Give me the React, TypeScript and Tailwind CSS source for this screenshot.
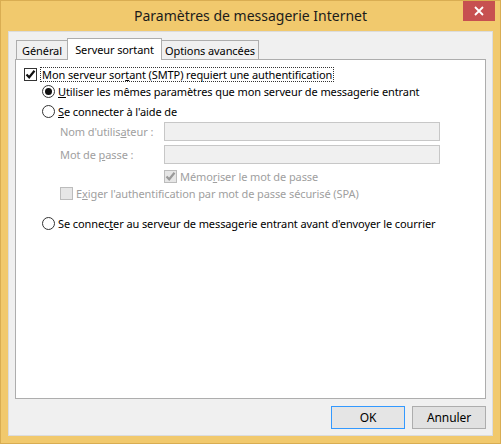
import React from 'react'

const font = { fontFamily: '"Noto Sans", "Open Sans", sans-serif' }

function Check({ checked, disabled }: { checked?: boolean; disabled?: boolean }) {
  return (
    <span
      className={`flex items-center justify-center w-[13px] h-[13px] border shrink-0 ${
        disabled ? 'border-[#bcbcbc] bg-[#e6e6e6]' : 'border-[#333] bg-white'
      }`}
    >
      {checked && (
        <svg width="11" height="11" viewBox="0 0 11 11">
          <path d="M1.5 5.5 L4.2 8.3 L9.5 1.8" fill="none" stroke={disabled ? '#9a9a9a' : '#111'} strokeWidth="2.2" />
        </svg>
      )}
    </span>
  )
}

function Radio({ checked }: { checked?: boolean }) {
  return (
    <span className="flex items-center justify-center w-[13px] h-[13px] rounded-full border border-[#333] bg-white shrink-0">
      {checked && <span className="w-[7px] h-[7px] rounded-full bg-[#111]" />}
    </span>
  )
}

export default function App() {
  return (
    <div
      style={font}
      className="w-[501px] h-[444px] bg-[#f1c96d] border border-[#d9ad52] flex flex-col text-[11px] tracking-[-0.1px] text-black leading-none"
    >
      <div className="relative h-[30px] flex items-center justify-center">
        <span className="text-[14px] tracking-normal text-[#1b1b1b]">Paramètres de messagerie Internet</span>
        <div className="absolute top-0 right-[5px] w-[32px] h-[20px] bg-[#c75050] flex items-center justify-center">
          <svg width="10" height="10" viewBox="0 0 10 10">
            <path d="M1 1 L9 9 M9 1 L1 9" stroke="#fff" strokeWidth="1.8" />
          </svg>
        </div>
      </div>

      <div className="flex-1 mx-[7px] mb-[7px] bg-[#f0f0f0] border border-[#dcdcdc] flex flex-col px-[6px] pt-[6px]">
        {/* tabs */}
        <div className="flex items-end h-[21px] pl-[1px]">
          <div className="h-[19px] w-[52px] flex items-center justify-center border border-b-0 border-[#adadad] bg-[#f0f0f0]">
            Général
          </div>
          <div className="h-[22px] w-[95px] flex items-center justify-center border border-b-0 border-[#adadad] bg-white -ml-[1px] relative z-10 -mb-[1px]">
            Serveur sortant
          </div>
          <div className="h-[19px] w-[98px] flex items-center justify-center border border-b-0 border-[#adadad] bg-[#f0f0f0] -ml-[1px]">
            Options avancées
          </div>
        </div>

        {/* panel */}
        <div className="h-[340px] bg-white border border-[#adadad] pl-[8px] pt-[7px] flex flex-col">
          <div className="flex items-center h-[14px] gap-[3px]">
            <Check checked />
            <span className="border border-dotted border-[#333] px-[1px] py-[1px] -my-[2px]">
              Mon serveur sor<u>t</u>ant (SMTP) requiert une authentification
            </span>
          </div>

          <div className="pl-[18px] pt-[3px] flex flex-col">
            <div className="flex items-center h-[14px] gap-[3px]">
              <Radio checked />
              <span>
                <u>U</u>tiliser les mêmes paramètres que mon serveur de messagerie entrant
              </span>
            </div>
            <div className="flex items-center h-[14px] gap-[3px] mt-[6px]">
              <Radio />
              <span>
                <u>S</u>e connecter à l'aide de
              </span>
            </div>

            <div className="pl-[18px] mt-[4px] flex flex-col text-[#a0a0a0]">
              <div className="flex items-center h-[19px]">
                <span className="w-[104px]">
                  Nom d'utilis<u>a</u>teur :
                </span>
                <div className="w-[276px] h-[19px] border border-[#c7c7c7] bg-[#f0f0f0]" />
              </div>
              <div className="flex items-center h-[19px] mt-[4px]">
                <span className="w-[104px]">
                  Mot de <u>p</u>asse :
                </span>
                <div className="w-[276px] h-[19px] border border-[#c7c7c7] bg-[#f0f0f0]" />
              </div>
              <div className="flex items-center h-[14px] gap-[3px] mt-[5px] ml-[104px]">
                <Check checked disabled />
                <span>
                  Mémo<u>r</u>iser le mot de passe
                </span>
              </div>
              <div className="flex items-center h-[14px] gap-[3px] mt-[3px]">
                <Check disabled />
                <span>
                  E<u>x</u>iger l'authentification par mot de passe sécurisé (SPA)
                </span>
              </div>
            </div>

            <div className="flex items-center h-[14px] gap-[3px] mt-[16px]">
              <Radio />
              <span>
                Se connec<u>t</u>er au serveur de messagerie entrant avant d'envoyer le courrier
              </span>
            </div>
          </div>
        </div>

        {/* buttons */}
        <div className="flex justify-end gap-[7px] mt-[7px]">
          <button className="w-[74px] h-[23px] border border-[#3399ff] bg-[#e5e5e5] text-[12px]" style={font}>
            OK
          </button>
          <button className="w-[74px] h-[23px] border border-[#adadad] bg-[#e1e1e1] text-[12px]" style={font}>
            Annuler
          </button>
        </div>
      </div>
    </div>
  )
}
